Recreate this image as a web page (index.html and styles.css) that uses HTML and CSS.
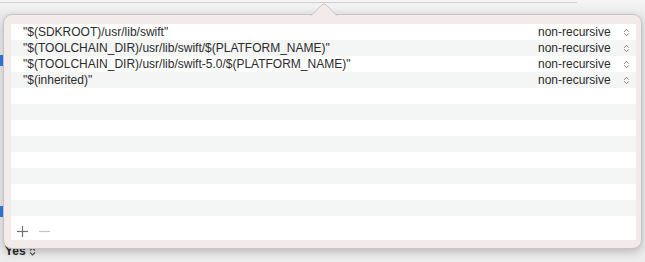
FILE: index.html
```html
<!DOCTYPE html>
<html lang="en">
<head>
    <meta charset="UTF-8">
    <title>Import Paths</title>
    <link rel="stylesheet" href="styles.css">
</head>
<body>
    <div class="backdrop">
        <div class="backdrop-top"></div>
        <div class="backdrop-mark mark-one"></div>
        <div class="backdrop-mark mark-two"></div>
        <div class="backdrop-value">Yes <span class="stepper small">
            <svg width="7" height="9" viewBox="0 0 7 9" fill="none" stroke="currentColor" stroke-width="1.2">
                <polyline points="1,3.5 3.5,1 6,3.5"></polyline>
                <polyline points="1,5.5 3.5,8 6,5.5"></polyline>
            </svg>
        </span></div>
    </div>

    <div class="popover">
        <svg class="popover-arrow" width="26" height="13" viewBox="0 0 26 13">
            <path d="M0 12.5 L11 1.8 Q13 0 15 1.8 L26 12.5" fill="#f3ebe9" stroke="#c9c5c4" stroke-width="1"></path>
        </svg>
        <div class="table">
            <div class="rows" id="rows"></div>
            <div class="table-footer">
                <svg width="11" height="11" viewBox="0 0 11 11" stroke="#6f6f6f" stroke-width="1.2">
                    <line x1="5.5" y1="0" x2="5.5" y2="11"></line>
                    <line x1="0" y1="5.5" x2="11" y2="5.5"></line>
                </svg>
                <svg width="11" height="11" viewBox="0 0 11 11" stroke="#c4c4c4" stroke-width="1.2">
                    <line x1="0" y1="5.5" x2="11" y2="5.5"></line>
                </svg>
            </div>
        </div>
    </div>

    <script>
        // Rutas de búsqueda
        const paths = [
            '"$(SDKROOT)/usr/lib/swift"',
            '"$(TOOLCHAIN_DIR)/usr/lib/swift/$(PLATFORM_NAME)"',
            '"$(TOOLCHAIN_DIR)/usr/lib/swift-5.0/$(PLATFORM_NAME)"',
            '"$(inherited)"'
        ];
        const totalRows = 12;

        const stepper = '<svg width="7" height="9" viewBox="0 0 7 9" fill="none" stroke="currentColor" stroke-width="1">' +
            '<polyline points="1.2,3.6 3.5,1.3 5.8,3.6"></polyline>' +
            '<polyline points="1.2,5.4 3.5,7.7 5.8,5.4"></polyline></svg>';

        const rows = document.getElementById('rows');
        for (let i = 0; i < totalRows; i++) {
            const row = document.createElement('div');
            row.className = 'row';
            if (i < paths.length) {
                row.innerHTML = '<span class="path"></span>' +
                    '<span class="mode">non-recursive</span>' +
                    '<span class="stepper">' + stepper + '</span>';
                row.querySelector('.path').textContent = paths[i];
            }
            rows.appendChild(row);
        }
    </script>
</body>
</html>
```

FILE: styles.css
```css
body {
    margin: 0;
    width: 645px;
    height: 262px;
    overflow: hidden;
    background-color: #ececec;
    font-family: "Liberation Sans", Arial, sans-serif;
    position: relative;
}

.backdrop {
    height: 262px;
    display: flex;
    flex-direction: column;
    background: linear-gradient(#f6f6f6, #ebebeb 14px, #ececec);
}

.backdrop-top {
    height: 2px;
    width: 577px;
    border-bottom: 1px solid #d0d0d0;
}

.backdrop-mark {
    width: 3px;
    height: 11px;
    background-color: #2f7be6;
}

.mark-one {
    margin-top: 52px;
}

.mark-two {
    margin-top: 140px;
}

.backdrop-value {
    margin-top: auto;
    margin-bottom: 4px;
    padding-left: 5px;
    font-size: 12px;
    font-weight: bold;
    color: #262626;
    display: flex;
    align-items: center;
    gap: 3px;
}

.popover {
    position: absolute;
    left: 3px;
    top: 14px;
    width: 639px;
    height: 235px;
    box-sizing: border-box;
    padding: 9px 5px 8px 7px;
    background-color: #f3ebe9;
    border: 1px solid #c9c5c4;
    border-radius: 9px;
    box-shadow: 0 3px 8px rgba(0, 0, 0, 0.22);
}

.popover-arrow {
    position: absolute;
    left: 307px;
    top: -12px;
}

.table {
    height: 100%;
    background-color: white;
    display: flex;
    flex-direction: column;
}

.row {
    height: 16px;
    display: flex;
    align-items: center;
    padding: 0 6px 0 12px;
    font-size: 12px;
    color: #2b2b2b;
}

.row:nth-child(even) {
    background-color: #f4f5f5;
}

.path {
    flex: 1;
    white-space: nowrap;
}

.mode {
    width: 85px;
}

.stepper {
    display: flex;
    color: #7a7a7a;
}

.stepper.small {
    color: #555;
}

.table-footer {
    flex: 1;
    display: flex;
    align-items: center;
    gap: 11px;
    padding: 6px 0 0 6px;
}
```
